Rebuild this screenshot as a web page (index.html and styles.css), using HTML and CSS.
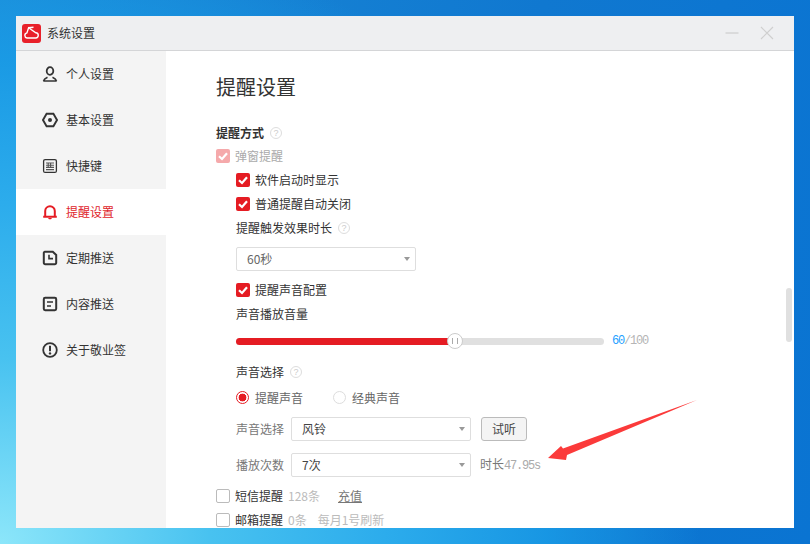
FILE: index.html
```html
<!DOCTYPE html>
<html lang="zh-CN">
<head>
  <meta charset="UTF-8">
  <title>系统设置</title>
  <link rel="stylesheet" href="styles.css">
</head>
<body>
  <svg class="defs" width="0" height="0">
    <symbol id="tick" viewBox="0 0 14 14">
      <path d="M3 7.2 L6 10 L11 4.2" fill="none" stroke="#fff" stroke-width="2.2"/>
    </symbol>
  </svg>

  <div class="window">
    <div class="titlebar">
      <svg class="logo" width="19" height="19" viewBox="0 0 19 19">
        <rect width="19" height="19" rx="3" fill="#e8202a"/>
        <path d="M5 14 H13.5 A2.6 2.6 0 0 0 13.8 8.8 L6.6 3.8 L4.9 8.9 A2.6 2.6 0 0 0 5 14 Z M6.6 3.8 L11.5 3.2" fill="none" stroke="#fff" stroke-width="1.4"/>
      </svg>
      <span class="titlebar-text">系统设置</span>
      <svg class="win-btn btn-min" width="14" height="14" viewBox="0 0 14 14">
        <path d="M0.5 7 H13.5" stroke="#c6c6c6" stroke-width="1"/>
      </svg>
      <svg class="win-btn btn-close" width="14" height="14" viewBox="0 0 14 14">
        <path d="M1 1 L13 13 M13 1 L1 13" stroke="#cfcfcf" stroke-width="1.2"/>
      </svg>
    </div>

    <div class="main">
      <div class="sidebar">
        <div class="nav-item">
          <svg class="nav-icon" width="16" height="16" viewBox="0 0 16 16">
            <ellipse cx="8" cy="5" rx="3.3" ry="3.8" fill="none" stroke="#333" stroke-width="1.8"/>
            <path d="M1.5 15 C2 13 3.8 12 5.5 11.2 M14.5 15 C14 13 12.2 12 10.5 11.2 M1.3 15 H14.7" fill="none" stroke="#333" stroke-width="1.6"/>
          </svg>
          个人设置
        </div>
        <div class="nav-item">
          <svg class="nav-icon" width="16" height="16" viewBox="0 0 16 16">
            <path d="M4.6 1.8 H11.4 L15 8 L11.4 14.2 H4.6 L1 8 Z" fill="none" stroke="#333" stroke-width="1.9"/>
            <circle cx="8" cy="8" r="2" fill="#333"/>
          </svg>
          基本设置
        </div>
        <div class="nav-item">
          <svg class="nav-icon" width="16" height="16" viewBox="0 0 16 16">
            <rect x="1.6" y="1.6" width="12.8" height="12.8" rx="1.5" fill="none" stroke="#333" stroke-width="1.3"/>
            <path d="M4 5 H12 M4 7.2 H12 M4 9.4 H12 M4 11.6 H12 M6.2 4.5 V10 M8.6 4.5 V10" stroke="#555" stroke-width="1.1"/>
          </svg>
          快捷键
        </div>
        <div class="nav-item active">
          <svg class="nav-icon" width="16" height="16" viewBox="0 0 16 16">
            <path d="M3.2 12.5 V7 A4.8 4.8 0 0 1 12.8 7 V12.5 M1.2 12.8 H14.8" fill="none" stroke="#e51c23" stroke-width="2"/>
            <path d="M6 14 H10 L9 15.2 H7 Z" fill="#e51c23"/>
          </svg>
          提醒设置
        </div>
        <div class="nav-item">
          <svg class="nav-icon" width="16" height="16" viewBox="0 0 16 16">
            <path d="M2.8 1.8 H10.8 L14.2 5 V12.8 A1.4 1.4 0 0 1 12.8 14.2 H3.2 A1.4 1.4 0 0 1 1.8 12.8 V2.8 A1 1 0 0 1 2.8 1.8 Z" fill="none" stroke="#333" stroke-width="2"/>
            <path d="M7 4.8 V8.6 H11" fill="none" stroke="#333" stroke-width="1.6"/>
          </svg>
          定期推送
        </div>
        <div class="nav-item">
          <svg class="nav-icon" width="16" height="16" viewBox="0 0 16 16">
            <rect x="1.8" y="1.8" width="12.4" height="12.4" rx="1.4" fill="none" stroke="#333" stroke-width="2"/>
            <path d="M5 6 H11 M5 10 H9" stroke="#333" stroke-width="1.6"/>
          </svg>
          内容推送
        </div>
        <div class="nav-item">
          <svg class="nav-icon" width="16" height="16" viewBox="0 0 16 16">
            <circle cx="8" cy="8" r="6.8" fill="none" stroke="#333" stroke-width="1.8"/>
            <path d="M8 3.8 V9.2" stroke="#333" stroke-width="2"/>
            <circle cx="8" cy="11.4" r="1.2" fill="#333"/>
          </svg>
          关于敬业签
        </div>
      </div>

      <div class="content">
        <h1 class="page-title">提醒设置</h1>
        <div class="row section-head"><b>提醒方式</b><span class="help">?</span></div>

        <div class="row faded">
          <span class="check on"><svg width="14" height="14"><use href="#tick"/></svg></span>
          弹窗提醒
        </div>

        <div class="sub">
          <div class="row">
            <span class="check on"><svg width="14" height="14"><use href="#tick"/></svg></span>
            软件启动时显示
          </div>
          <div class="row">
            <span class="check on"><svg width="14" height="14"><use href="#tick"/></svg></span>
            普通提醒自动关闭
          </div>
          <div class="row">提醒触发效果时长<span class="help">?</span></div>
          <div class="select select-short"><span>60秒</span></div>
          <div class="row row-gap">
            <span class="check on"><svg width="14" height="14"><use href="#tick"/></svg></span>
            提醒声音配置
          </div>
          <div class="row">声音播放音量</div>

          <div class="slider-row">
            <div class="slider">
              <div class="slider-fill"></div>
              <div class="slider-thumb"></div>
            </div>
            <span class="slider-val"><em>60</em>/100</span>
          </div>

          <div class="row row-sound">声音选择<span class="help">?</span></div>
          <div class="row radios">
            <span class="radio on"></span><span class="radio-label">提醒声音</span>
            <span class="radio radio-second"></span><span class="radio-label">经典声音</span>
          </div>

          <div class="field field-first">
            <span class="field-label">声音选择</span>
            <div class="select select-long"><span class="dark">风铃</span></div>
            <button class="try-btn" type="button">试听</button>
          </div>
          <div class="field field-second">
            <span class="field-label">播放次数</span>
            <div class="select select-long"><span class="dark">7次</span></div>
            <span class="duration">时长<i>47.95s</i></span>
          </div>
        </div>

        <div class="row row-sms">
          <span class="check"></span>
          短信提醒
          <span class="note note-count">128条</span>
          <span class="recharge">充值</span>
        </div>
        <div class="row">
          <span class="check"></span>
          邮箱提醒
          <span class="note note-count">0条</span>
          <span class="note note-refresh">每月1号刷新</span>
        </div>

        <div class="scroll-thumb"></div>
        <svg class="arrow" width="160" height="70" viewBox="0 0 160 70">
          <path d="M151 0 L17 48.5 L15 46 L2 58 L20 60 L21 55 Z" fill="#fb3a3a"/>
        </svg>
      </div>
    </div>
  </div>
</body>
</html>
```

FILE: styles.css
```css
* {
  box-sizing: border-box;
}

html, body {
  height: 100%;
}

body {
  margin: 0;
  padding: 16px;
  overflow: hidden;
  font-family: "Noto Sans CJK SC", "Liberation Sans", sans-serif;
  font-size: 12px;
  color: #333;
  background:
    radial-gradient(ellipse 700px 620px at 0 100%, #8ce6fa 0, #48c2f0 30%, #2cacec 55%, rgba(26, 158, 232, .8) 78%, rgba(26, 140, 220, 0) 100%),
    linear-gradient(100deg, #1b8ad6 0, #1078d0 60%, #0a74d2 100%);
}

.defs {
  position: absolute;
}

.window {
  width: 778px;
  height: 512px;
  display: flex;
  flex-direction: column;
  background: #fff;
  overflow: hidden;
}

.titlebar {
  height: 35px;
  flex: none;
  display: flex;
  align-items: center;
  padding-left: 6px;
  background: #eeeff1;
  border-bottom: 1px solid #d4d5d7;
}

.logo {
  margin-right: 6px;
}

.titlebar-text {
  flex: 1;
  margin-bottom: 2px;
}

.btn-min {
  margin-right: 21px;
}

.btn-close {
  margin-right: 20px;
}

.main {
  flex: 1;
  display: flex;
  min-height: 0;
}

.sidebar {
  width: 150px;
  flex: none;
  background: #f4f4f4;
}

.nav-item {
  height: 46px;
  display: flex;
  align-items: center;
  padding: 0 0 2px 26px;
}

.nav-item.active {
  background: #fff;
  color: #e0252b;
}

.nav-icon {
  margin: 1px 8px 0 0;
}

.content {
  flex: 1;
  position: relative;
  padding: 21px 0 0 50px;
}

.page-title {
  margin: 0 0 20px;
  height: 30px;
  line-height: 30px;
  font-size: 20px;
  font-weight: normal;
}

.help {
  width: 12px;
  height: 12px;
  margin: 2px 0 0 6px;
  border: 1px solid #ddd;
  border-radius: 50%;
  color: #ccc;
  font-size: 9px;
  line-height: 10px;
  text-align: center;
  font-family: "Liberation Sans", sans-serif;
}

.row {
  height: 24px;
  display: flex;
  align-items: center;
  padding-bottom: 2px;
}

.section-head {
  height: 22px;
}

.faded {
  color: #aaa;
}

.check {
  width: 14px;
  height: 14px;
  margin: 2px 5px 0 0;
  border: 1px solid #bbb;
  border-radius: 2px;
  background: #fff;
  flex: none;
}

.check svg {
  display: block;
}

.check.on {
  border: 0;
  background: #e51c23;
}

.faded .check.on {
  background: #f5a9ab;
}

.sub {
  padding-left: 20px;
}

.select {
  height: 24px;
  display: flex;
  align-items: center;
  justify-content: space-between;
  padding: 0 5px 2px 10px;
  border: 1px solid #dedede;
  border-radius: 2px;
  color: #666;
}

.select::after {
  content: "";
  margin-top: 2px;
  border-top: 4px solid #999;
  border-left: 3.5px solid transparent;
  border-right: 3.5px solid transparent;
}

.select-short {
  width: 180px;
  margin-top: 7px;
}

.select-long {
  width: 180px;
}

.dark {
  color: #444;
}

.row-gap {
  margin-top: 7px;
}

.slider-row {
  height: 30px;
  display: flex;
  align-items: center;
}

.slider {
  width: 368px;
  height: 7px;
  position: relative;
  border-radius: 4px;
  background: #e0e0e0;
}

.slider-fill {
  width: 60%;
  height: 100%;
  border-radius: 4px 0 0 4px;
  background: #e51c23;
}

.slider-thumb {
  position: absolute;
  left: 211px;
  top: -5px;
  width: 16px;
  height: 16px;
  border: 1px solid #ccc;
  border-radius: 50%;
  background: #fff;
}

.slider-thumb::after {
  content: "";
  display: block;
  width: 4px;
  height: 6px;
  margin: 4px auto 0;
  border-left: 1px solid #aaa;
  border-right: 1px solid #aaa;
}

.slider-val {
  margin-left: 8px;
  font-family: "Liberation Mono", monospace;
  font-size: 12px;
  letter-spacing: -1.2px;
  color: #b5b5b5;
}

.slider-val em {
  font-style: normal;
  color: #1e9fff;
}

.row-sound {
  margin-top: 4px;
}

.radios {
  margin-top: 2px;
  color: #666;
}

.radio {
  width: 13px;
  height: 13px;
  flex: none;
  border: 1px solid #ddd;
  border-radius: 50%;
  margin: 1px 6px 0 0;
}

.radio.on {
  border-color: #e51c23;
  background: radial-gradient(circle, #e51c23 0, #e51c23 3.6px, #fff 4.2px);
}

.radio-second {
  margin-left: 30px;
}

.field {
  display: flex;
  align-items: center;
  height: 24px;
}

.field-first {
  margin-top: 7px;
}

.field-second {
  margin-top: 12px;
}

.field-label {
  width: 55px;
  margin-bottom: 2px;
  color: #777;
}

.try-btn {
  width: 46px;
  height: 24px;
  margin-left: 10px;
  padding: 0 0 2px;
  border: 1px solid #bbb;
  border-radius: 3px;
  background: #f4f4f4;
  font: inherit;
  color: #444;
}

.duration {
  margin: 0 0 2px 9px;
  color: #777;
}

.duration i {
  font-family: "Liberation Mono", monospace;
  font-size: 12px;
  letter-spacing: -1.2px;
  font-style: normal;
  color: #aaa;
}

.row-sms {
  margin-top: 7px;
}

.note {
  color: #bbb;
}

.note-count {
  margin-left: 5px;
}

.note-refresh {
  margin-left: 11px;
}

.recharge {
  margin-left: 18px;
  color: #777;
  text-decoration: underline;
}

.scroll-thumb {
  position: absolute;
  top: 237px;
  right: 2px;
  width: 6px;
  height: 54px;
  border-radius: 3px;
  background: #e0e0e0;
}

.arrow {
  position: absolute;
  left: 380px;
  top: 349px;
}
```
